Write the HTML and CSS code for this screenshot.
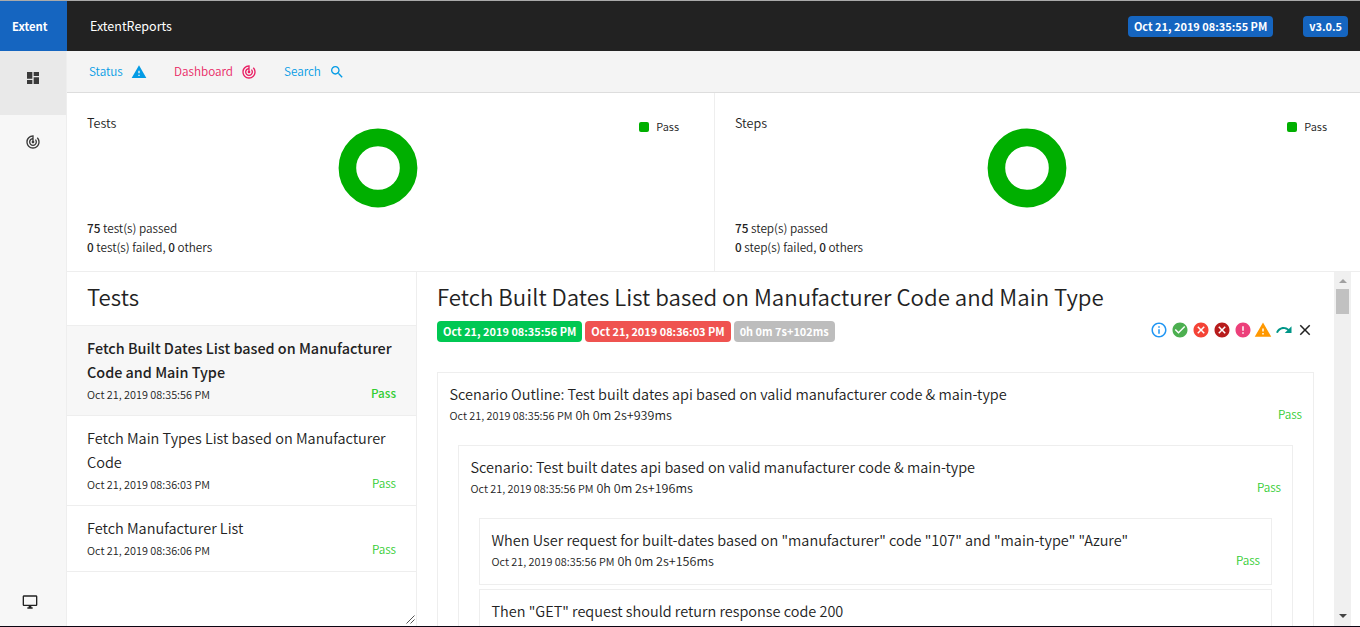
FILE: index.html
```html
<!DOCTYPE html>
<html lang="en">
<head>
<meta charset="utf-8">
<title>ExtentReports</title>
<link rel="stylesheet" href="styles.css">
</head>
<body>
<svg class="defs" aria-hidden="true">
  <symbol id="track" viewBox="0 0 24 24"><path d="M19.07 4.93l-1.41 1.41C19.1 7.79 20 9.79 20 12c0 4.42-3.58 8-8 8s-8-3.58-8-8c0-4.08 3.05-7.44 7-7.93v2.02C8.16 6.57 6 9.03 6 12c0 3.31 2.69 6 6 6s6-2.69 6-6c0-1.66-.67-3.16-1.76-4.24l-1.41 1.41C15.55 9.9 16 10.9 16 12c0 2.21-1.79 4-4 4s-4-1.79-4-4c0-1.86 1.28-3.41 3-3.86v2.14c-.6.35-1 .98-1 1.72 0 1.1.9 2 2 2s2-.9 2-2c0-.74-.4-1.38-1-1.72V2h-1C6.48 2 2 6.48 2 12s4.48 10 10 10 10-4.48 10-10c0-2.76-1.12-5.26-2.93-7.07z"/></symbol>
  <symbol id="warning" viewBox="0 0 24 24"><path d="M1 21h22L12 2 1 21zm12-3h-2v-2h2v2zm0-4h-2v-4h2v4z"/></symbol>
  <symbol id="cancel" viewBox="0 0 24 24"><path d="M12 2C6.47 2 2 6.47 2 12s4.47 10 10 10 10-4.47 10-10S17.53 2 12 2zm5 13.59L15.59 17 12 13.41 8.41 17 7 15.59 10.59 12 7 8.41 8.41 7 12 10.59 15.59 7 17 8.41 13.41 12 17 15.59z"/></symbol>
</svg>
<div class="app">
  <header class="topbar">
    <div class="logo">Extent</div>
    <div class="report-name">ExtentReports</div>
    <span class="label blue">Oct 21, 2019 08:35:55 PM</span>
    <span class="label blue version">v3.0.5</span>
  </header>
  <div class="body">
    <aside class="side">
      <a class="side-item active"><svg class="i16" viewBox="0 0 24 24"><path d="M3 13h8V3H3v10zm0 8h8v-6H3v6zm10 0h8V11h-8v10zm0-18v6h8V3h-8z"/></svg></a>
      <a class="side-item"><svg class="i16"><use href="#track"/></svg></a>
      <a class="side-bottom"><svg class="i16" viewBox="0 0 24 24"><path d="M21 2H3c-1.1 0-2 .9-2 2v12c0 1.1.9 2 2 2h7v2H8v2h8v-2h-2v-2h7c1.1 0 2-.9 2-2V4c0-1.1-.9-2-2-2zm0 14H3V4h18v12z"/></svg></a>
    </aside>
    <main class="main">
      <nav class="tools">
        <a class="tool status">Status<svg class="i16"><use href="#warning"/></svg></a>
        <a class="tool dash">Dashboard<svg class="i16"><use href="#track"/></svg></a>
        <a class="tool search">Search<svg class="i16" viewBox="0 0 24 24"><path d="M15.5 14h-.79l-.28-.27C15.41 12.59 16 11.11 16 9.5 16 5.91 13.09 3 9.5 3S3 5.91 3 9.5 5.91 16 9.5 16c1.61 0 3.09-.59 4.23-1.57l.27.28v.79l5 4.99L20.49 19l-4.99-5zm-6 0C7.01 14 5 11.99 5 9.5S7.01 5 9.5 5 14 7.01 14 9.5 11.99 14 9.5 14z"/></svg></a>
      </nav>
      <section class="charts">
        <div class="chart">
          <div class="chart-title">Tests</div>
          <svg class="donut" viewBox="0 0 80 80"><circle cx="40" cy="40" r="30.6"/></svg>
          <div class="legend"><i></i>Pass</div>
          <div class="summary"><div><b>75</b> test(s) passed</div><div><b>0</b> test(s) failed, <b>0</b> others</div></div>
        </div>
        <div class="chart">
          <div class="chart-title">Steps</div>
          <svg class="donut" viewBox="0 0 80 80"><circle cx="40" cy="40" r="30.6"/></svg>
          <div class="legend"><i></i>Pass</div>
          <div class="summary"><div><b>75</b> step(s) passed</div><div><b>0</b> step(s) failed, <b>0</b> others</div></div>
        </div>
      </section>
      <section class="split">
        <div class="list">
          <h2 class="list-title">Tests</h2>
          <div class="test selected">
            <div class="name">Fetch Built Dates List based on Manufacturer Code and Main Type</div>
            <div class="meta"><span class="date">Oct 21, 2019 08:35:56 PM</span><span class="pass">Pass</span></div>
          </div>
          <div class="test">
            <div class="name">Fetch Main Types List based on Manufacturer Code</div>
            <div class="meta"><span class="date">Oct 21, 2019 08:36:03 PM</span><span class="pass">Pass</span></div>
          </div>
          <div class="test">
            <div class="name">Fetch Manufacturer List</div>
            <div class="meta"><span class="date">Oct 21, 2019 08:36:06 PM</span><span class="pass">Pass</span></div>
          </div>
          <svg class="grip" viewBox="0 0 9 9"><path d="M.5 8.5l8-8M4.5 8.5l4-4"/></svg>
        </div>
        <div class="detail">
          <h1 class="detail-title">Fetch Built Dates List based on Manufacturer Code and Main Type</h1>
          <div class="detail-bar">
            <span class="label green">Oct 21, 2019 08:35:56 PM</span>
            <span class="label red">Oct 21, 2019 08:36:03 PM</span>
            <span class="label grey">0h 0m 7s+102ms</span>
            <div class="filters">
              <svg class="info" viewBox="0 0 24 24"><path d="M11 17h2v-6h-2v6zm1-15C6.48 2 2 6.48 2 12s4.48 10 10 10 10-4.48 10-10S17.52 2 12 2zm0 18c-4.41 0-8-3.59-8-8s3.59-8 8-8 8 3.59 8 8-3.59 8-8 8zM11 9h2V7h-2v2z"/></svg>
              <svg class="ok" viewBox="0 0 24 24"><path d="M12 2C6.48 2 2 6.48 2 12s4.48 10 10 10 10-4.48 10-10S17.52 2 12 2zm-2 15l-5-5 1.41-1.41L10 14.17l7.59-7.59L19 8l-9 9z"/></svg>
              <svg class="fail"><use href="#cancel"/></svg>
              <svg class="fatal"><use href="#cancel"/></svg>
              <svg class="error" viewBox="0 0 24 24"><path d="M12 2C6.48 2 2 6.48 2 12s4.48 10 10 10 10-4.48 10-10S17.52 2 12 2zm1 15h-2v-2h2v2zm0-4h-2V7h2v6z"/></svg>
              <svg class="warn"><use href="#warning"/></svg>
              <svg class="skip" viewBox="0 0 24 24"><path d="M18.4 10.6C16.55 8.99 14.15 8 11.5 8c-4.65 0-8.58 3.03-9.96 7.22L3.9 16c1.05-3.19 4.05-5.5 7.6-5.5 1.95 0 3.73.72 5.12 1.88L13 16h9V7l-3.6 3.6z"/></svg>
              <svg class="clear" viewBox="0 0 24 24"><path d="M19 6.41L17.59 5 12 10.59 6.41 5 5 6.41 10.59 12 5 17.59 6.41 19 12 13.41 17.59 19 19 17.59 13.41 12z"/></svg>
            </div>
          </div>
          <div class="node outer">
            <div class="node-name">Scenario Outline: Test built dates api based on valid manufacturer code &amp; main-type</div>
            <div class="node-meta"><span class="date">Oct 21, 2019 08:35:56 PM</span><span class="took">0h 0m 2s+939ms</span><span class="pass">Pass</span></div>
            <div class="node">
              <div class="node-name">Scenario: Test built dates api based on valid manufacturer code &amp; main-type</div>
              <div class="node-meta"><span class="date">Oct 21, 2019 08:35:56 PM</span><span class="took">0h 0m 2s+196ms</span><span class="pass">Pass</span></div>
              <div class="node leaf">
                <div class="node-name">When User request for built-dates based on "manufacturer" code "107" and "main-type" "Azure"</div>
                <div class="node-meta"><span class="date">Oct 21, 2019 08:35:56 PM</span><span class="took">0h 0m 2s+156ms</span><span class="pass">Pass</span></div>
              </div>
              <div class="node leaf">
                <div class="node-name">Then "GET" request should return response code 200</div>
              </div>
            </div>
          </div>
        </div>
        <div class="scrollbar"><i class="up"></i><i class="thumb"></i><i class="down"></i></div>
      </section>
    </main>
  </div>
</div>
</body>
</html>
```
FILE: styles.css
```css
* { box-sizing: border-box; }
body { margin: 0; background: #fff; color: #222; font-family: "Noto Sans CJK SC", "Open Sans", sans-serif; font-size: 11.7px; }
svg { fill: currentColor; display: block; flex: none; }
.defs { display: none; }
h1, h2 { margin: 0; font-weight: 350; }
.app { height: 627px; display: flex; flex-direction: column; overflow: hidden; border-top: 1px solid #aaa; border-bottom: 1px solid #0c0512; }
.topbar { height: 50px; flex: none; display: flex; align-items: center; background: #222; color: #fff; padding-right: 12px; }
.logo { width: 67px; height: 50px; line-height: 51px; padding-left: 12px; background: #1565c0; font-weight: 700; font-size: 11.3px; }
.report-name { flex: 1; padding-left: 23px; font-size: 12.5px; line-height: 50px; }
.label { height: 21px; line-height: 21px; padding: 0 6px; border-radius: 4px; color: #fff; font-weight: 700; font-size: 10.95px; white-space: nowrap; }
.blue { background: #1565c0; }
.version { margin-left: 30px; }
.green { background: #00c853; }
.red { background: #ef5350; }
.grey { background: #bdbdbd; }
.body { flex: 1; min-height: 0; display: flex; }
.side { width: 67px; flex: none; background: #f7f7f7; border-right: 1px solid #eee; display: flex; flex-direction: column; color: #3a3a3a; }
.side-item { height: 64px; display: flex; justify-content: center; padding-top: 19px; }
.side-item.active { background: #e9e9e9; }
.side-bottom { margin-top: auto; padding: 0 0 16px 22px; color: #222; }
.i16 { width: 16px; height: 16px; }
.main { flex: 1; min-width: 0; display: flex; flex-direction: column; }
.tools { height: 42px; flex: none; display: flex; align-items: center; background: #f4f4f4; border-bottom: 1px solid #ddd; padding-left: 22px; }
.tool { display: flex; align-items: center; justify-content: space-between; color: #039be5; line-height: 20px; padding-bottom: 1px; font-size: 11.7px; font-weight: 350; }
.tool svg { margin-top: 1px; }
.status { width: 58px; margin-right: 27px; }
.dash { width: 83px; margin-right: 27px; color: #e91e63; }
.search { width: 61px; }
.charts { height: 179px; flex: none; display: grid; grid-template-columns: 648px 1fr; border-bottom: 1px solid #eee; }
.chart { display: grid; grid-template-columns: 250px 82px 1fr; grid-template-rows: 125px 1fr; padding-left: 20px; }
.chart:first-child { border-right: 1px solid #eee; }
.chart-title { line-height: 20px; padding-top: 20px; font-size: 12.6px; font-weight: 350; }
.donut { width: 80px; height: 80px; fill: none; stroke: #00af00; stroke-width: 17.6px; margin-top: 35px; margin-left: 1px; }
.chart:last-child .donut { margin-left: 2px; }
.legend { display: flex; align-items: center; justify-self: end; height: 20px; margin-top: 23px; padding-right: 35px; font-size: 11px; font-weight: 350; }
.chart:last-child .legend { padding-right: 33px; }
.legend i { width: 10px; height: 10px; border-radius: 2px; background: #00af00; margin: 1px 7px 0 0; }
.summary { grid-column: 1 / -1; line-height: 19px; font-size: 11.75px; font-weight: 350; }
.summary b { font-weight: 500; }
.split { flex: 1; min-height: 0; display: flex; padding-right: 9px; }
.list { position: relative; width: 350px; flex: none; border-right: 1px solid #eee; }
.list-title { height: 54px; line-height: 49px; padding-left: 20px; font-size: 22.25px; border-bottom: 1px solid #eee; }
.test { padding: 10px 20px; border-bottom: 1px solid #eee; }
.selected { background: #f7f7f7; }
.name { font-size: 14.5px; line-height: 24px; font-weight: 350; }
.selected .name { font-size: 14.4px; font-weight: 500; }
.meta { display: flex; justify-content: space-between; height: 21px; line-height: 21px; }
.date { font-size: 10.87px; font-weight: 350; }
.pass { font-size: 11.7px; line-height: 17px; color: #32cd32; font-weight: 350; }
.selected .pass { font-weight: 500; }
.grip { position: absolute; right: 1px; bottom: 2px; width: 9px; height: 9px; fill: none; stroke: #555; }
.detail { flex: 1; min-width: 0; padding: 0 20px; overflow: hidden; }
.detail-title { font-size: 22.25px; line-height: 30px; height: 41px; padding-top: 9px; white-space: nowrap; }
.detail-bar { display: flex; gap: 3px; padding-top: 8px; align-items: center; height: 29px; }
.filters { margin: -3px 0 0 auto; display: flex; gap: 2.8px; }
.filters svg { width: 18px; height: 18px; }
.info { color: #2196f3; }
.ok { color: #4caf50; }
.fail { color: #f44336; }
.fatal { color: #b71c1c; }
.error { color: #ec407a; }
.warn { color: #ff9800; }
.skip { color: #009688; }
.clear { color: #222; }
.node { border: 1px solid #eee; padding: 10px 20px 0; margin-top: 20px; height: 400px; }
.outer { margin-top: 30px; }
.leaf { height: 67px; }
.leaf + .leaf { margin-top: 4px; }
.node-name { font-size: 14.48px; line-height: 22px; font-weight: 350; margin-left: -8.5px; white-space: nowrap; }
.node-meta { display: flex; line-height: 20px; margin: 0 -9px 0 -8.5px; }
.took { font-size: 12.6px; margin-left: 3px; font-weight: 350; }
.node-meta .pass { margin-left: auto; line-height: 18px; }
.scrollbar { width: 17px; background: #f0f0f0; display: flex; flex-direction: column; align-items: center; }
.scrollbar i { flex: none; }
.up { border: 4px solid transparent; border-top: 0; border-bottom-color: #a0a0a0; margin: 7px 0 6px; }
.thumb { width: 13px; height: 25px; background: #c1c1c1; }
.down { border: 4px solid transparent; border-bottom: 0; border-top-color: #444; margin: auto 0 8px; }
```
